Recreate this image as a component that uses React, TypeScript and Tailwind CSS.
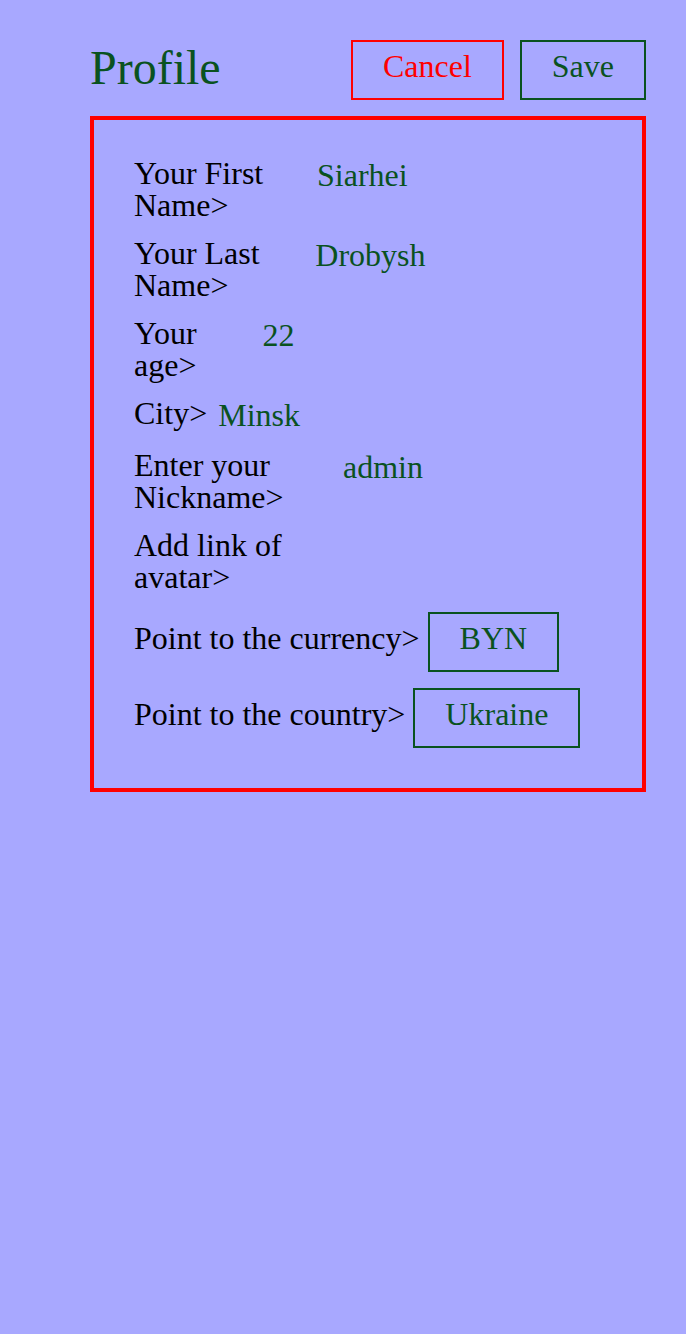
import React from "react"

const fields = [
  { label: "Your First Name>", value: "Siarhei" },
  { label: "Your Last Name>", value: "Drobysh" },
  { label: "Your age>", value: "22" },
  { label: "City>", value: "Minsk" },
  { label: "Enter your Nickname>", value: "admin" },
  { label: "Add link of avatar>", value: "" },
]

const pickers = [
  { label: "Point to the currency>", value: "BYN" },
  { label: "Point to the country>", value: "Ukraine" },
]

export default function App() {
  return (
    <div className="min-h-[1334px] bg-[#a8a8ff] pl-[90px] pr-10 pt-10 font-['Liberation_Serif',serif] text-[32px]">
      {/* header */}
      <div className="flex items-start">
        <h1 className="text-[48px] leading-[normal] text-[#0a521f]">Profile</h1>
        <div className="ml-auto flex gap-4">
          <button className="flex h-[60px] items-start border-2 border-[#ff0000] px-[30px] pt-[6px] leading-[normal] text-[#ff0000]">
            Cancel
          </button>
          <button className="flex h-[60px] items-start border-2 border-[#0a521f] px-[30px] pt-[6px] leading-[normal] text-[#0a521f]">
            Save
          </button>
        </div>
      </div>

      {/* form card */}
      <div className="mt-4 border-4 border-[#ff0000] px-10 pt-[37px] pb-10">
        <div className="flex flex-col gap-4">
          {fields.map((f) => (
            <div key={f.label} className="flex items-start gap-[11px]">
              <label className="leading-none text-black">{f.label}</label>
              <div className="w-[384px] leading-9 text-[#0a521f]">{f.value}</div>
            </div>
          ))}
        </div>

        <div className="mt-[19px] flex flex-col gap-4">
          {pickers.map((p) => (
            <div key={p.label} className="leading-none text-black">
              {p.label}{" "}
              <span className="inline-block h-[60px] cursor-pointer border-2 border-[#0a521f] px-[30px] pt-[6px] align-baseline leading-[normal] text-[#0a521f]">
                {p.value}
              </span>
            </div>
          ))}
        </div>
      </div>
    </div>
  )
}
